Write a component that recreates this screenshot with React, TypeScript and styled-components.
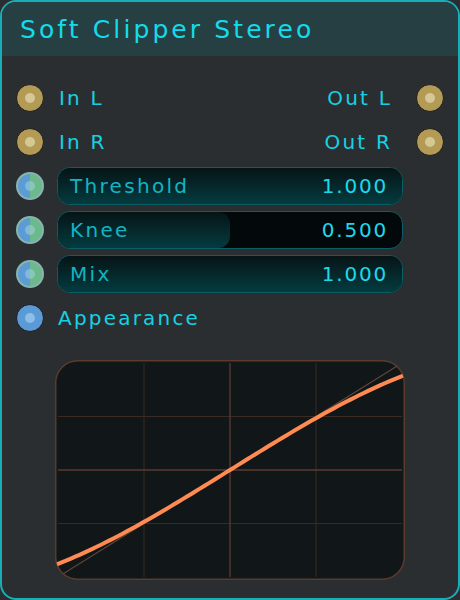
import React from 'react';
import styled, { createGlobalStyle } from 'styled-components';

const Global = createGlobalStyle`
  html, body { margin: 0; padding: 0; background: #2b2e30; }
  * { box-sizing: border-box; }
`;

const FONT = `"DejaVu Sans", "Noto Sans", sans-serif`;

type PortKind = 'audio' | 'param' | 'style';

interface IParam {
  label: string,
  value: number
}

const params: IParam[] = [
  { label: 'Threshold', value: 1.0 },
  { label: 'Knee', value: 0.5 },
  { label: 'Mix', value: 1.0 }
];

const Port = ({ kind }: { kind: PortKind }) => (
  <PortRing $kind={kind}>
    <PortDot $kind={kind} />
  </PortRing>
);

const curvePoints = () => {
  const x0 = 3, x1 = 347, y0 = 3, y1 = 217;
  const cx = (x0 + x1) / 2, cy = (y0 + y1) / 2;
  const hw = (x1 - x0) / 2, hh = (y1 - y0) / 2;
  const pts: string[] = [];
  for (let i = 0; i <= 80; i++) {
    const t = -1 + (i / 80) * 2;
    const v = t - 0.123 * t * t * t;
    pts.push(`${(cx + t * hw).toFixed(2)},${(cy - v * hh).toFixed(2)}`);
  }
  return pts.join(' ');
};

const Graph = () => (
  <GraphBox>
    <svg width="350" height="220" viewBox="0 0 350 220">
      <defs>
        <clipPath id="plot">
          <rect x="1" y="1" width="348" height="218" rx="21" />
        </clipPath>
      </defs>
      <rect x="0.75" y="0.75" width="348.5" height="218.5" rx="22" fill="#111618" stroke="#5b3b2e" strokeWidth="1.5" />
      <g clipPath="url(#plot)">
        <g stroke="#3a2a24" strokeWidth="1">
          <line x1="89" y1="3" x2="89" y2="217" />
          <line x1="261" y1="3" x2="261" y2="217" />
          <line x1="3" y1="56.5" x2="347" y2="56.5" />
          <line x1="3" y1="163.5" x2="347" y2="163.5" />
        </g>
        <g stroke="#5a3d30" strokeWidth="1.3">
          <line x1="175" y1="3" x2="175" y2="217" />
          <line x1="3" y1="110" x2="347" y2="110" />
        </g>
        <line x1="3" y1="217" x2="347" y2="3" stroke="#5e4538" strokeWidth="1.2" />
        <polyline points={curvePoints()} fill="none" stroke="#ff8a52" strokeWidth="4" strokeLinecap="round" />
      </g>
    </svg>
  </GraphBox>
);

const App = () => {
  return (
    <>
      <Global />
      <Panel>
        <Header>
          <Title>Soft Clipper Stereo</Title>
        </Header>
        <Body>
          <Row>
            <Port kind="audio" />
            <PortLabels>
              <Label>In L</Label>
              <Label>Out L</Label>
            </PortLabels>
            <Port kind="audio" />
          </Row>
          <Row>
            <Port kind="audio" />
            <PortLabels>
              <Label>In R</Label>
              <Label>Out R</Label>
            </PortLabels>
            <Port kind="audio" />
          </Row>
          {params.map((p) => (
            <Row key={p.label}>
              <Port kind="param" />
              <Slider>
                <SliderFill style={{ width: `${Math.min(p.value, 1) * 100}%` }} />
                <SliderLabel>{p.label}</SliderLabel>
                <SliderValue>{p.value.toFixed(3)}</SliderValue>
              </Slider>
              <span />
            </Row>
          ))}
          <Row>
            <Port kind="style" />
            <Label>Appearance</Label>
            <span />
          </Row>
          <Graph />
        </Body>
      </Panel>
    </>
  );
};

const Panel = styled.div`
  width: 460px;
  height: 600px;
  border: 2px solid #19adb8;
  border-radius: 16px;
  background: #2b2e30;
  overflow: hidden;
  font-family: ${FONT};
`;
const Header = styled.div`
  height: 54px;
  background: #263f42;
  display: flex;
  align-items: center;
  padding-left: 18px;
`;
const Title = styled.h1`
  margin: 0;
  font-size: 25px;
  font-weight: 400;
  letter-spacing: 3.1px;
  color: #12dcec;
`;
const Body = styled.div`
  padding: 20px 14px 0;
  display: flex;
  flex-direction: column;
`;
const Row = styled.div`
  height: 44px;
  display: grid;
  grid-template-columns: 28px 1fr 28px;
  column-gap: 13px;
  align-items: center;
`;
const PortRing = styled.div<{ $kind: PortKind }>`
  width: 28px;
  height: 28px;
  border-radius: 50%;
  display: flex;
  align-items: center;
  justify-content: center;
  border: ${(p) => (p.$kind === 'param' ? '2px solid #86b4ae' : '1.5px solid #1b1c1d')};
  background: ${(p) =>
    p.$kind === 'audio'
      ? '#b39b55'
      : p.$kind === 'param'
        ? 'linear-gradient(90deg, #5c9bd6 50%, #6cb98b 50%)'
        : '#5a9ad6'};
`;
const PortDot = styled.div<{ $kind: PortKind }>`
  width: 10px;
  height: 10px;
  border-radius: 50%;
  background: ${(p) =>
    p.$kind === 'audio'
      ? '#d7c797'
      : p.$kind === 'param'
        ? 'rgba(160, 210, 220, 0.55)'
        : '#8ebee6'};
`;
const PortLabels = styled.div`
  display: flex;
  justify-content: space-between;
  padding: 0 11px 0 1px;
`;
const Label = styled.span`
  font-size: 20px;
  letter-spacing: 2.2px;
  color: #14d2e4;
  padding-left: 1px;
`;
const Slider = styled.div`
  position: relative;
  height: 38px;
  border: 1px solid #0c5e66;
  border-radius: 13px;
  background: #03090a;
  display: flex;
  align-items: center;
  justify-content: space-between;
  padding: 0 14px 0 12px;
  overflow: hidden;
`;
const SliderFill = styled.div`
  position: absolute;
  left: 0;
  top: 0;
  bottom: 0;
  border-radius: 12px;
  background: linear-gradient(180deg, #061416 0%, #043b3f 100%);
`;
const SliderLabel = styled.span`
  position: relative;
  font-size: 20px;
  letter-spacing: 2.3px;
  color: #12b4c4;
`;
const SliderValue = styled.span`
  position: relative;
  font-size: 20px;
  letter-spacing: 1.8px;
  color: #1ed8ea;
`;
const GraphBox = styled.div`
  margin: 20px 39px 0;
  width: 350px;
  height: 220px;
  line-height: 0;
`;

export default App;
